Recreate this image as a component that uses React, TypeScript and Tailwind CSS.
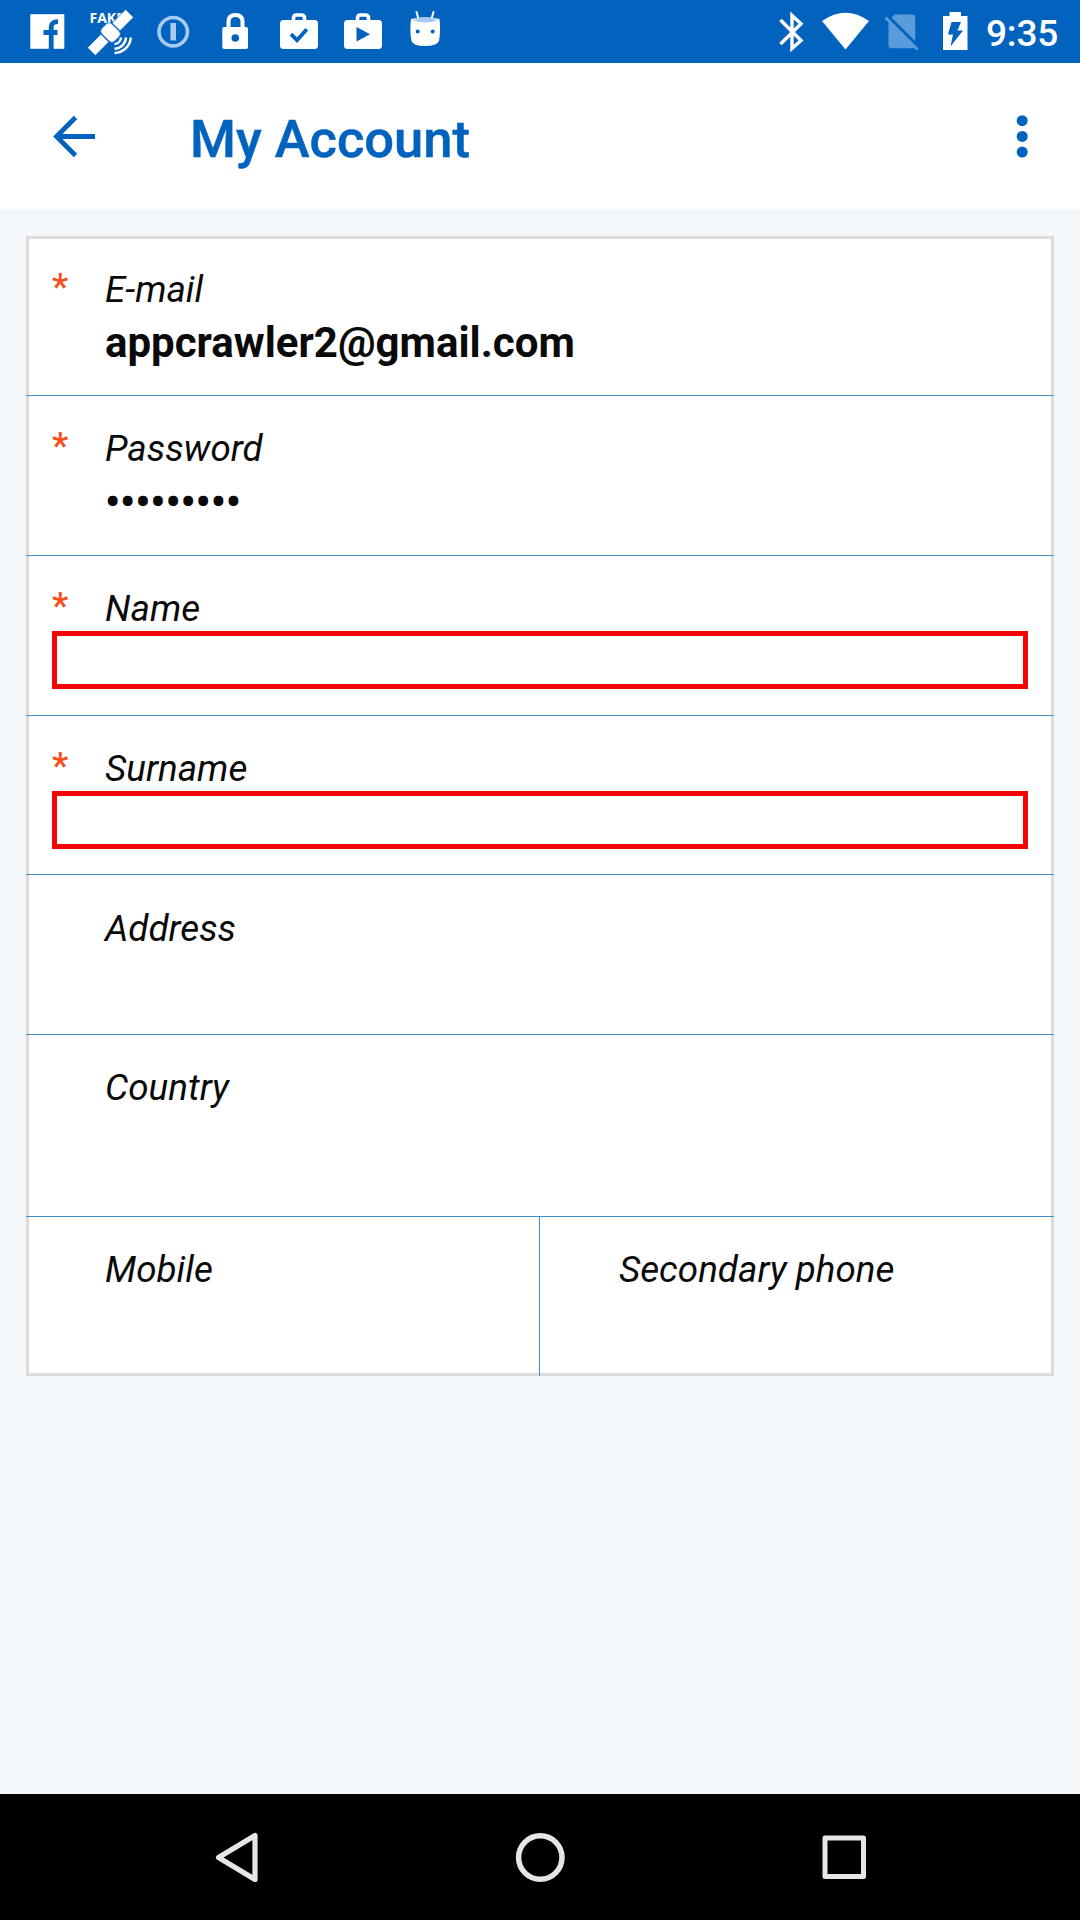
import React from "react";

type TileProps = { x: number; w: number; children: React.ReactNode };

// A full-height slice of the status bar; drawings inside use bar coordinates.
function Tile({ x, w, children }: TileProps) {
  return (
    <svg width={w} height={63} viewBox={`${x} 0 ${w} 63`} className="block shrink-0" fill="#fff">
      {children}
    </svg>
  );
}

function Briefcase({ x, children }: { x: number; children: React.ReactNode }) {
  return (
    <Tile x={x - 14} w={64}>
      <path d={`M${x + 13.5} 21v-3q0-3 3-3h5q3 0 3 3v3`} fill="none" stroke="#fff" strokeWidth={3.6} />
      <rect x={x} y={20} width={38} height={29} rx={3.5} />
      {children}
    </Tile>
  );
}

function StatusBar() {
  return (
    <header className="flex h-[63px] shrink-0 items-center justify-between bg-[#0263bf] text-white">
      <div className="flex">
        <Tile x={0} w={76}>
          <rect x={30.3} y={14.2} width={34} height={34.6} />
          <path d="M51.2 49V27.500q0-5.800 6.800-5.800M43.500 32.500h14" fill="none" stroke="#0263bf" strokeWidth={4.800} />
        </Tile>
        <Tile x={76} w={68}>
          <text x={89.500} y={22.700} fontSize={14} fontWeight={700} className="font-['Open_Sans',sans-serif]">
            FAKE
          </text>
          <g transform="translate(110.500 32.500) rotate(-45)" stroke="#0263bf" strokeWidth={0.6}>
            <path d="M-27-5.500h19v11h-19zM8-5.500h19v11H8z" />
            <rect x={-7} y={-9} width={14} height={18} rx={4} />
          </g>
          <g fill="none" stroke="#fff" strokeWidth={2.500}>
            <path d="M121 37.500a7 7 0 0 1-6.500 6.500M126 37.500a12 12 0 0 1-11.500 11.300M130.800 37.500a16.500 16.500 0 0 1-16.300 15.500" />
          </g>
        </Tile>
        <Tile x={144} w={58}>
          <g stroke="#a6caf0" fill="none">
            <circle cx={173.200} cy={31.700} r={14.200} strokeWidth={3.600} />
            <path d="M173.200 23v17.500" strokeWidth={5.600} />
          </g>
        </Tile>
        <Tile x={202} w={64}>
          <path d="M228.500 28v-6.500q0-6.500 7-6.500t7 6.500V28" fill="none" stroke="#fff" strokeWidth={4} />
          <rect x={222.300} y={27} width={25.700} height={22} rx={2} />
          <circle cx={235.300} cy={38} r={3.800} fill="#0263bf" />
        </Tile>
        <Briefcase x={280.5}>
          <path d="M291.500 34.200l6 6 9.800-11" fill="none" stroke="#0263bf" strokeWidth={3.800} />
        </Briefcase>
        <Briefcase x={343.5}>
          <path d="M356 27v14.500l13.500-7.200z" fill="#0263bf" />
        </Briefcase>
        <Tile x={394} w={62}>
          <path d="M418.500 19l-2-7M431.500 19l2-7" stroke="#fff" strokeWidth={2} strokeLinecap="round" />
          <path d="M411 19q14-3.500 28.500 0 1.300 12-.5 22-2 5-14 5t-13.500-5q-2-10-.5-22z" />
          <path d="M412.500 20q12.500-6 25.500 0-12.500 5-25.500 0z" fill="#a6caf0" />
          <circle cx={417.700} cy={31.500} r={2} fill="#0263bf" />
          <circle cx={432.700} cy={31.500} r={2} fill="#0263bf" />
        </Tile>
      </div>
      <div className="flex items-center">
        <Tile x={766} w={48}>
          <path d="M780.500 20l20.500 20.500-9 8V15.500l9 8.300L780.500 44" fill="none" stroke="#fff" strokeWidth={3.400} />
        </Tile>
        <Tile x={814} w={64}>
          <path d="M822 21q23.500-16.500 47 0L845.500 49.500z" />
        </Tile>
        <Tile x={878} w={52}>
          <path d="M888.500 21l6-6.500h17.500q3.200 0 3.200 3.200v27.300q0 3.200-3.200 3.200h-20.500q-3 0-3-3.200z" fill="#5a9bdc" />
          <path d="M888 16.500l31 31" stroke="#0263bf" strokeWidth={3.500} />
          <path d="M885.500 17.500l32 32" stroke="#5a9bdc" strokeWidth={2.800} />
        </Tile>
        <Tile x={930} w={54}>
          <path d="M943 16h6.500v-4h11.500v4h6.500v34H943z" />
          <path d="M951.500 22h9.500l-3.500 8.500h5.500l-12.500 16 2.500-12h-5z" fill="#0263bf" />
        </Tile>
        <span className="w-[96px] pl-[2px] pt-[4px] text-[37px] font-medium leading-[44px] tracking-[-0.2px]">9:35</span>
      </div>
    </header>
  );
}

function AppBar() {
  return (
    <div className="flex h-[146px] shrink-0 items-start bg-white pl-[48px] pr-[38px] text-[#0263bf]">
      <svg width={52} height={50} viewBox="0 0 52 50" className="mt-[49px] block" fill="none" stroke="currentColor">
        <path d="M27.500 5.500L8.500 24.500l19 19M8 24.500h39" strokeWidth={4.800} />
      </svg>
      <h1 className="ml-[90px] mt-[44px] text-[52.500px] font-medium leading-[64px] [-webkit-text-stroke:0.500px_#0263bf]">
        My Account
      </h1>
      <svg width={40} height={50} viewBox="0 0 40 50" className="ml-auto mt-[49px] block" fill="currentColor">
        <circle cx={20.200} cy={8.700} r={5.500} />
        <circle cx={20.200} cy={24.400} r={5.500} />
        <circle cx={20.200} cy={40.100} r={5.500} />
      </svg>
    </div>
  );
}

type FieldProps = {
  label: string;
  size: string;
  required?: boolean;
  children?: React.ReactNode;
};

function Field({ label, size, required, children }: FieldProps) {
  return (
    <div className={`flex flex-col pl-[26px] pr-[26px] ${size}`}>
      <div className="flex h-[44px] shrink-0 items-start text-[36.800px] leading-[44px]">
        <span className="-mt-[3px] w-[53px] font-medium text-[#f4511e]">{required ? "*" : ""}</span>
        <span className="whitespace-nowrap italic">{label}</span>
      </div>
      {children}
    </div>
  );
}

function ErrorBox() {
  return <div className="h-[58px] border-[5px] border-[#f20505]" />;
}

function NavBar() {
  return (
    <nav className="flex h-[126px] shrink-0 items-center justify-between bg-black pl-[206px] pr-[206px]">
      <svg width={60} height={60} viewBox="0 0 60 60" fill="none" stroke="#e6e6e6" strokeWidth={5.200} strokeLinejoin="round">
        <path d="M12.500 30.500L49 8.500v44z" />
      </svg>
      <svg width={60} height={60} viewBox="0 0 60 60" fill="none" stroke="#e6e6e6" strokeWidth={5.500}>
        <circle cx={30.300} cy={30.500} r={21.700} />
      </svg>
      <svg width={60} height={60} viewBox="0 0 60 60" fill="none" stroke="#e6e6e6" strokeWidth={5} strokeLinejoin="round">
        <rect x={11} y={11} width={38.500} height={38.500} />
      </svg>
    </nav>
  );
}

export default function App() {
  return (
    <div className="flex h-[1920px] w-[1080px] flex-col bg-[#f4f8fb] font-[Roboto,sans-serif] text-[#0a0a0a]">
      <StatusBar />
      <AppBar />
      <main className="grow px-[26px] pt-[27px]">
        <div className="bg-white shadow-[inset_0_0_0_3px_#dcdcde]">
          <Field label="E-mail" required size="h-[160px] border-b border-[#3d94c4] pt-[32px]">
            <div className="pl-[53px] pt-[7px] text-[42px] font-bold leading-[48px]">appcrawler2@gmail.com</div>
          </Field>
          <Field label="Password" required size="h-[160px] border-b border-[#3d94c4] pt-[31px]">
            <div className="pl-[53px] pt-[8px] text-[42px] font-bold leading-[48px]">•••••••••</div>
          </Field>
          <Field label="Name" required size="h-[160px] border-b border-[#3d94c4] pt-[31px]">
            <ErrorBox />
          </Field>
          <Field label="Surname" required size="h-[159px] border-b border-[#3d94c4] pt-[31px]">
            <ErrorBox />
          </Field>
          <Field label="Address" size="h-[160px] border-b border-[#3d94c4] pt-[32px]" />
          <Field label="Country" size="h-[182px] border-b border-[#3d94c4] pt-[31px]" />
          <div className="grid h-[159px] grid-cols-2">
            <Field label="Mobile" size="border-r border-[#3d94c4] pt-[31px]" />
            <Field label="Secondary phone" size="pt-[31px]" />
          </div>
        </div>
      </main>
      <NavBar />
    </div>
  );
}
